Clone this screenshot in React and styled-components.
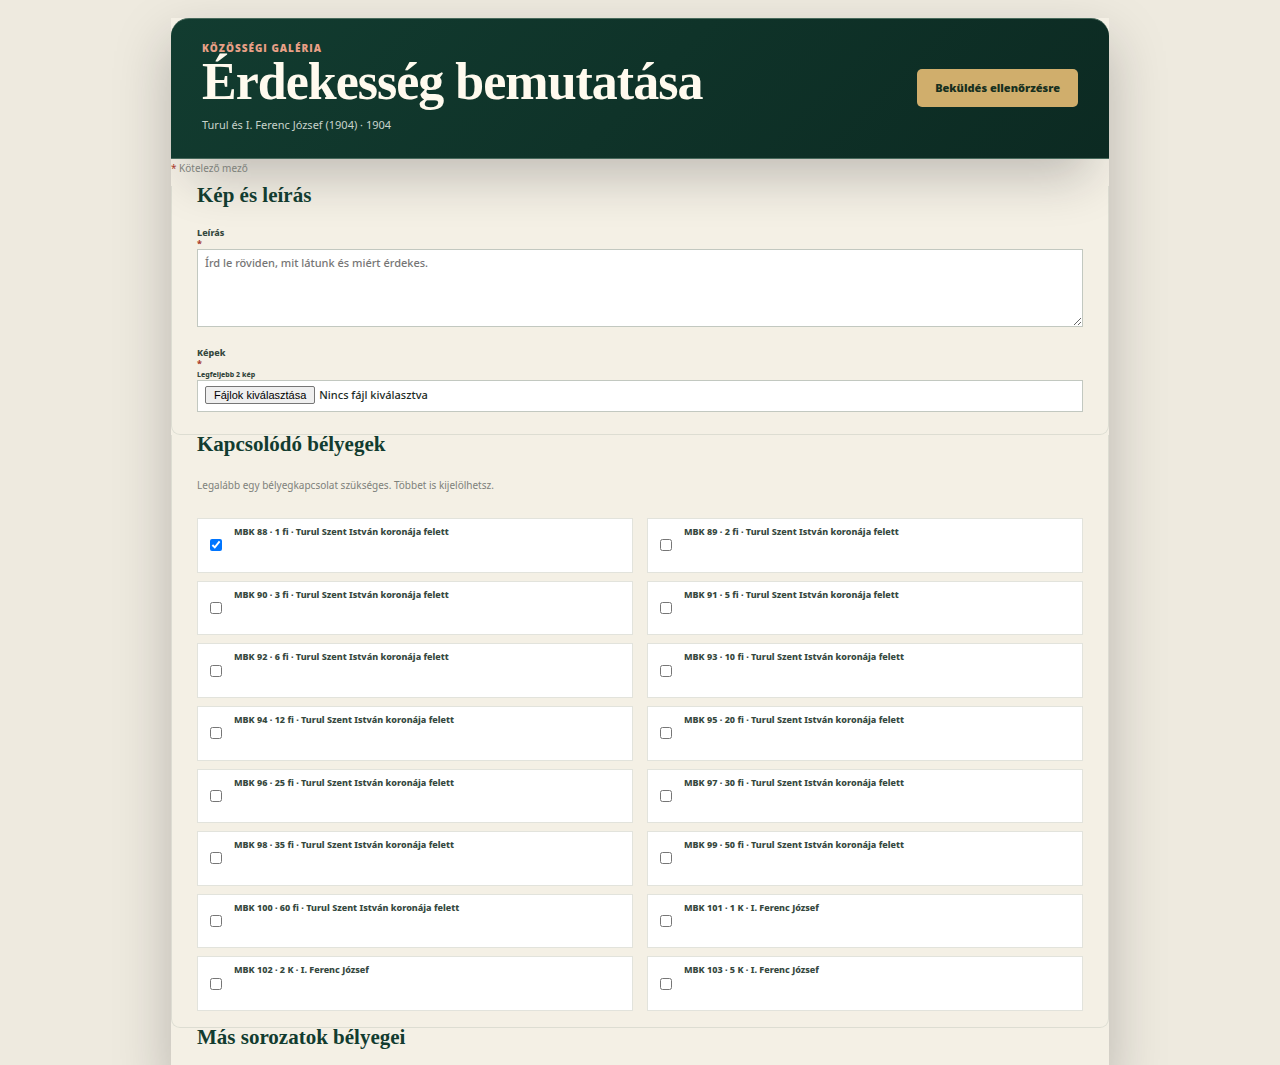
import React, { useState } from 'react'
import styled, { createGlobalStyle } from 'styled-components'

const stamps = [
    { id: 88, value: '1 fi', motif: 'Turul Szent István koronája felett' },
    { id: 89, value: '2 fi', motif: 'Turul Szent István koronája felett' },
    { id: 90, value: '3 fi', motif: 'Turul Szent István koronája felett' },
    { id: 91, value: '5 fi', motif: 'Turul Szent István koronája felett' },
    { id: 92, value: '6 fi', motif: 'Turul Szent István koronája felett' },
    { id: 93, value: '10 fi', motif: 'Turul Szent István koronája felett' },
    { id: 94, value: '12 fi', motif: 'Turul Szent István koronája felett' },
    { id: 95, value: '20 fi', motif: 'Turul Szent István koronája felett' },
    { id: 96, value: '25 fi', motif: 'Turul Szent István koronája felett' },
    { id: 97, value: '30 fi', motif: 'Turul Szent István koronája felett' },
    { id: 98, value: '35 fi', motif: 'Turul Szent István koronája felett' },
    { id: 99, value: '50 fi', motif: 'Turul Szent István koronája felett' },
    { id: 100, value: '60 fi', motif: 'Turul Szent István koronája felett' },
    { id: 101, value: '1 K', motif: 'I. Ferenc József' },
    { id: 102, value: '2 K', motif: 'I. Ferenc József' },
    { id: 103, value: '5 K', motif: 'I. Ferenc József' }
]

const App = () => {
    const [selected, setSelected] = useState([88])
    const [description, setDescription] = useState('')
    const [files, setFiles] = useState([])

    const toggleStamp = id => {
        setSelected(selected.includes(id) ? selected.filter(s => s !== id) : [...selected, id])
    }

    const submitHandler = event => {
        event.preventDefault()
    }

    return (
        <>
            <GlobalStyle />
            <Sheet onSubmit={submitHandler}>
                <Header>
                    <div>
                        <Eyebrow>Közösségi galéria</Eyebrow>
                        <Title>Érdekesség bemutatása</Title>
                        <Subtitle>Turul és I. Ferenc József (1904) · 1904</Subtitle>
                    </div>
                    <SubmitButton type="submit">Beküldés ellenőrzésre</SubmitButton>
                </Header>
                <RequiredNote><Star>*</Star> Kötelező mező</RequiredNote>
                <Section>
                    <SectionTitle>Kép és leírás</SectionTitle>
                    <Fields>
                        <div>
                            <FieldLabel htmlFor="description">Leírás<Star>*</Star></FieldLabel>
                            <Description
                                id="description"
                                name="description"
                                placeholder="Írd le röviden, mit látunk és miért érdekes."
                                value={description}
                                onChange={event => setDescription(event.target.value)}
                            />
                        </div>
                        <div>
                            <FieldLabel htmlFor="images">Képek<Star>*</Star><small>Legfeljebb 2 kép</small></FieldLabel>
                            <FileBox>
                                <FileInput
                                    id="images"
                                    name="images"
                                    type="file"
                                    accept="image/*"
                                    multiple
                                    onChange={event => setFiles([...event.target.files])}
                                />
                                <FileButton>Fájlok kiválasztása</FileButton>
                                <span>{files.length ? files.map(f => f.name).join(', ') : 'Nincs fájl kiválasztva'}</span>
                            </FileBox>
                        </div>
                    </Fields>
                </Section>
                <Section>
                    <SectionTitle>Kapcsolódó bélyegek</SectionTitle>
                    <Hint>Legalább egy bélyegkapcsolat szükséges. Többet is kijelölhetsz.</Hint>
                    <StampGrid>
                        {stamps.map(stamp => (
                            <StampCard key={stamp.id}>
                                <Checkbox
                                    type="checkbox"
                                    checked={selected.includes(stamp.id)}
                                    onChange={() => toggleStamp(stamp.id)}
                                />
                                <span>{`MBK ${stamp.id} · ${stamp.value} · ${stamp.motif}`}</span>
                            </StampCard>
                        ))}
                    </StampGrid>
                </Section>
                <Section $last>
                    <SectionTitle>Más sorozatok bélyegei</SectionTitle>
                </Section>
            </Sheet>
        </>
    )
}

const GlobalStyle = createGlobalStyle`
    * {
        box-sizing: border-box;
    }

    html {
        scrollbar-width: none;
    }

    body {
        margin: 0;
        background: #eeeadf;
        color: #1c3b31;
        font-family: "Noto Sans", "Open Sans", sans-serif;
        font-size: 11px;
    }
`

const Sheet = styled.form`
    width: calc(100% - 36px);
    max-width: 938px;
    margin: 18px auto 0;
    overflow: hidden;
    background: #f4f0e5;
    box-shadow: 0 24px 52px rgba(30, 26, 34, 0.26);
`

const Header = styled.header`
    display: flex;
    align-items: center;
    justify-content: space-between;
    gap: 24px;
    padding: 22px 31px 24px;
    border: 1px solid #48695c;
    border-width: 1px 0;
    border-radius: 18px 18px 0 0;
    background: linear-gradient(135deg, #123c30, #0c2a22);
    box-shadow: 0 38px 50px -20px rgba(30, 26, 34, 0.24);
`

const Eyebrow = styled.p`
    margin: 0;
    color: #e9a087;
    font-family: "Open Sans", sans-serif;
    font-size: 10px;
    font-weight: 800;
    line-height: 14px;
    letter-spacing: 1px;
    text-transform: uppercase;
`

const Title = styled.h1`
    margin: 4px 0 11px;
    color: #fffaee;
    font-family: "Liberation Serif", serif;
    font-size: 52px;
    font-weight: 700;
    line-height: 46px;
    letter-spacing: -1px;
`

const Subtitle = styled.p`
    margin: 0;
    color: #c8d3cb;
    font-size: 11px;
    line-height: 18px;
`

const SubmitButton = styled.button`
    height: 38px;
    padding: 0 18px;
    border: 0;
    border-radius: 5px;
    background: #d0ae6c;
    color: #17301f;
    font-family: inherit;
    font-size: 11px;
    font-weight: 900;
    cursor: pointer;
`

const RequiredNote = styled.p`
    margin: 0;
    padding-bottom: 9px;
    color: #7d817b;
    font-size: 10px;
    line-height: 18px;
`

const Star = styled.span`
    color: #a83a2c;
`

const Section = styled.section`
    padding: 0 25px ${props => (props.$last ? '26px' : '16px')};
    border: 1px solid ${props => (props.$last ? 'transparent' : 'rgba(28, 59, 49, 0.1)')};
    border-top: 0;
    border-radius: 0 0 9px 9px;
`

const SectionTitle = styled.h2`
    margin: 0;
    color: #123c30;
    font-family: "Liberation Serif", serif;
    font-size: 21px;
    font-weight: 700;
    line-height: 18px;
`

const Fields = styled.div`
    display: grid;
    gap: 20px;
    padding: 23px 0 6px;
`

const FieldLabel = styled.label`
    display: grid;
    color: #35483e;
    font-size: 9px;
    font-weight: 800;
    line-height: 11px;

    small {
        font-size: 7px;
    }
`

const Description = styled.textarea`
    display: block;
    width: 100%;
    height: 78px;
    padding: 5px 7px;
    border: 1px solid #c2c8c0;
    border-radius: 0;
    background: #fff;
    color: #1c3b31;
    font-family: inherit;
    font-size: 11px;
    font-weight: 500;
    line-height: 15px;
    resize: vertical;

    &::placeholder {
        color: #757575;
    }
`

const FileBox = styled.div`
    position: relative;
    display: flex;
    align-items: center;
    gap: 4px;
    height: 32px;
    padding: 0 7px 3px;
    border: 1px solid #c2c8c0;
    background: #fff;
    color: #1c2c25;
    font-size: 11px;
    font-weight: 500;

    &:focus-within {
        outline: 2px solid #d0ae6c;
    }
`

/* covers the whole box so that a click anywhere opens the picker */
const FileInput = styled.input`
    position: absolute;
    inset: 0;
    width: 100%;
    opacity: 0;
    cursor: pointer;
`

const FileButton = styled.span`
    padding: 0 8px;
    border: 1px solid #767676;
    border-radius: 2px;
    background: #efefef;
    color: #000;
    font-family: "Liberation Sans", Arial, sans-serif;
    font-size: 11px;
    font-weight: 400;
    line-height: 16px;
`

const Hint = styled.p`
    margin: 23px 0 24px;
    color: #7d817b;
    font-size: 10px;
    line-height: 18px;
`

const StampGrid = styled.div`
    display: grid;
    grid-template-columns: repeat(2, minmax(0, 1fr));
    grid-auto-rows: 1fr;
    gap: 8px 14px;
    min-height: 493px;
`

const StampCard = styled.label`
    display: flex;
    gap: 12px;
    padding: 7px 12px;
    border: 1px solid #e2e3dc;
    background: #fff;
    color: #35483e;
    font-size: 9px;
    font-weight: 800;
    line-height: 12px;
`

const Checkbox = styled.input`
    align-self: center;
    width: 12px;
    height: 12px;
    margin: 0;
`

export default App
